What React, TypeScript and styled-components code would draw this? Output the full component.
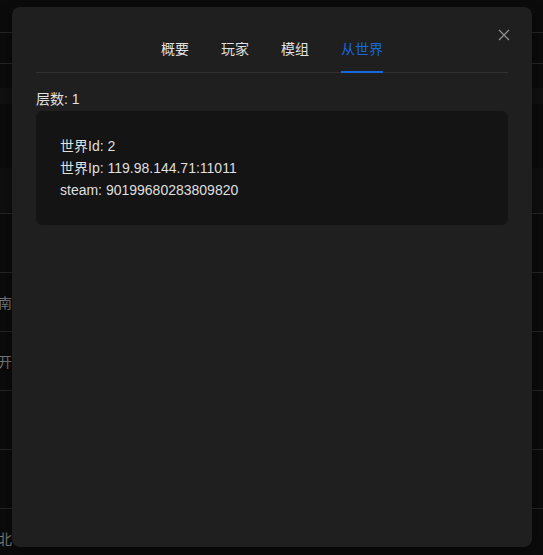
import React, { useState } from "react";
import styled, { createGlobalStyle } from "styled-components";

const GlobalStyle = createGlobalStyle`
  html, body {
    margin: 0;
    padding: 0;
    background: #0b0b0b;
    font-family: "Liberation Sans", "Noto Sans CJK SC", sans-serif;
    overflow: hidden;
  }
`;

// Background page (dimmed table behind the modal)
const Page = styled.div`
  position: relative;
  width: 543px;
  height: 555px;
  overflow: hidden;
  display: flex;
  flex-direction: column;
  background: #0b0b0b;
`;

const TopStrip = styled.div`
  height: 3px;
  background: #050505;
`;

const Row = styled.div<{ $h: number; $bg?: string; $line?: boolean }>`
  height: ${(p) => p.$h}px;
  flex-shrink: 0;
  background: ${(p) => p.$bg || "#0b0b0b"};
  border-bottom: ${(p) => (p.$line ? "1px solid #262626" : "none")};
  display: flex;
  align-items: center;
  color: #7a7a7a;
  font-size: 14px;
`;

const EdgeCell = styled.div`
  width: 12px;
  overflow: hidden;
  display: flex;
  justify-content: flex-end;
  white-space: nowrap;
`;

const MidCell = styled.div`
  margin-left: 236px;
  white-space: nowrap;
`;

// Modal
const Modal = styled.div`
  position: absolute;
  top: 7px;
  left: 12px;
  width: 520px;
  height: 540px;
  box-sizing: border-box;
  background: #1f1f1f;
  border-radius: 8px;
  padding: 19px 24px 20px;
  box-shadow: 0 6px 16px rgba(0, 0, 0, 0.4);
  color: rgba(255, 255, 255, 0.88);
`;

const CloseButton = styled.button`
  position: absolute;
  top: 16px;
  right: 16px;
  width: 24px;
  height: 24px;
  padding: 0;
  border: none;
  background: transparent;
  display: flex;
  align-items: center;
  justify-content: center;
  cursor: pointer;
`;

const TabNav = styled.div`
  display: flex;
  justify-content: center;
  gap: 32px;
  border-bottom: 1px solid #303030;
  margin-bottom: 15px;
`;

const Tab = styled.div<{ $active?: boolean }>`
  position: relative;
  padding: 12px 0;
  font-size: 14px;
  line-height: 22px;
  color: ${(p) => (p.$active ? "#1668dc" : "rgba(255, 255, 255, 0.88)")};
  cursor: pointer;

  &::after {
    content: "";
    position: absolute;
    left: 0;
    right: 0;
    bottom: -1px;
    height: 2px;
    background: ${(p) => (p.$active ? "#1668dc" : "transparent")};
  }
`;

const Level = styled.div`
  font-size: 14px;
  line-height: 22px;
  margin-bottom: 1px;
`;

const InfoBox = styled.div`
  background: #141414;
  border-radius: 6px;
  padding: 24px;
  font-size: 14px;
  line-height: 22px;
`;

const InfoLine = styled.div`
  white-space: nowrap;
`;

const tabs = ["概要", "玩家", "模组", "从世界"];

const rows = [
  { h: 32, line: true },
  { h: 30, line: true },
  { h: 24 },
  { h: 16, bg: "#111111" },
  { h: 64 },
  { h: 45, bg: "#0f0f0f", line: true },
  { h: 58, line: true },
  { h: 58, line: true, edge: "华南" },
  { h: 58, line: true, edge: "离开" },
  { h: 58, line: true },
  { h: 58, line: true },
  { h: 58, edge: "华北", mid: "0/30" },
];

const App: React.FC = () => {
  const [active, setActive] = useState(3);

  return (
    <>
      <GlobalStyle />
      <Page>
        <TopStrip />
        {rows.map((r, i) => (
          <Row key={i} $h={r.h} $bg={r.bg} $line={r.line}>
            <EdgeCell>{r.edge}</EdgeCell>
            {r.mid && <MidCell>{r.mid}</MidCell>}
          </Row>
        ))}

        <Modal>
          <CloseButton aria-label="close">
            <svg width="12" height="12" viewBox="0 0 12 12">
              <path
                d="M1 1 L11 11 M11 1 L1 11"
                stroke="#8c8c8c"
                strokeWidth="1.4"
                fill="none"
              />
            </svg>
          </CloseButton>
          <TabNav>
            {tabs.map((t, i) => (
              <Tab key={t} $active={i === active} onClick={() => setActive(i)}>
                {t}
              </Tab>
            ))}
          </TabNav>
          <Level>层数: 1</Level>
          <InfoBox>
            <InfoLine>世界Id: 2</InfoLine>
            <InfoLine>世界Ip: 119.98.144.71:11011</InfoLine>
            <InfoLine>steam: 90199680283809820</InfoLine>
          </InfoBox>
        </Modal>
      </Page>
    </>
  );
};

export default App;
